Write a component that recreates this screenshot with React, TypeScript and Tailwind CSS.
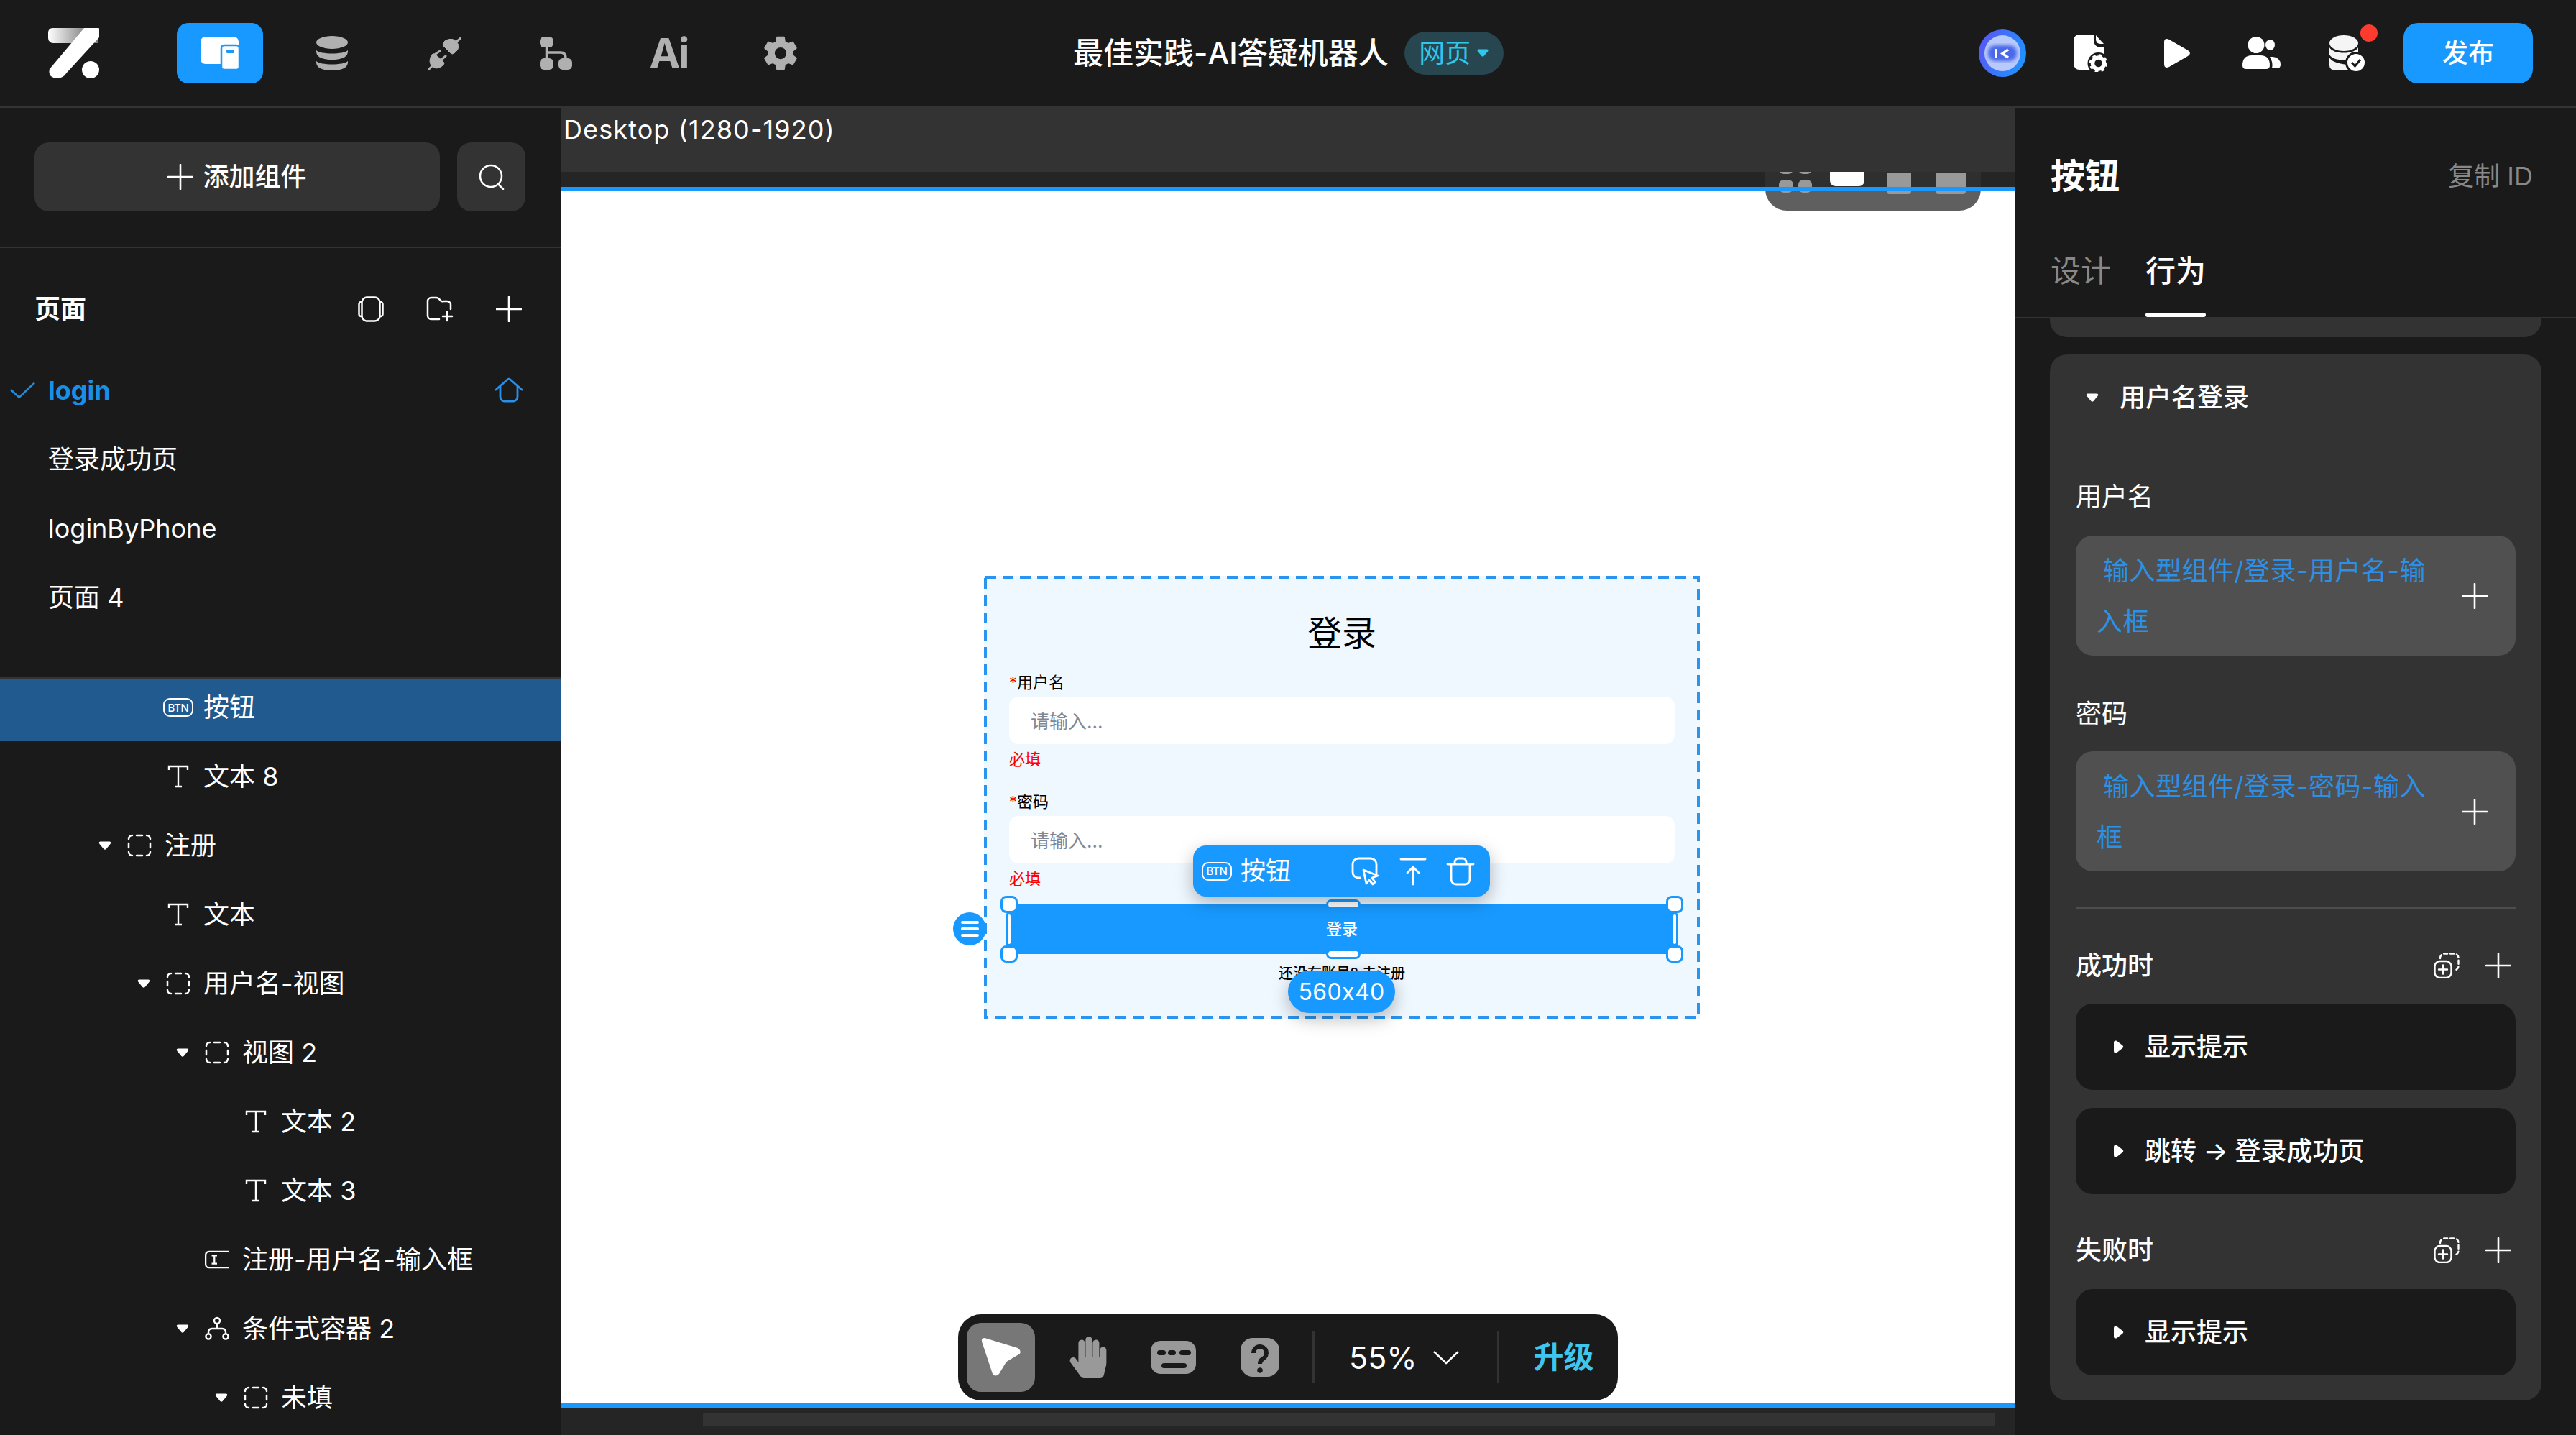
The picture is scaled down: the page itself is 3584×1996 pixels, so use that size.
import React from 'react';
import { IoSettingsSharp } from 'react-icons/io5';
import { FaHandPaper } from 'react-icons/fa';

const PlusIcon = ({ className = 'w-[36px] h-[36px]' }: { className?: string }) => (
  <svg viewBox="0 0 36 36" className={className} fill="none" stroke="currentColor" strokeWidth="2.6" strokeLinecap="round">
    <path d="M18 1V35M1 18H35" />
  </svg>
);

const TriangleDown = () => (
  <svg viewBox="0 0 16 11" className="w-[18px] h-[12px]" fill="white">
    <path d="M2 .5H14Q16.500 1 15 3.500L9.500 10Q8 11.500 6.500 10L1 3.500Q-.5 1 2 .5Z" />
  </svg>
);

const TriangleRight = () => (
  <svg viewBox="0 0 14 18" className="w-[14px] h-[18px]" fill="white">
    <path d="M0 3Q0-.5 4 .8L12 7Q14.500 9 12 11L4 17.200Q0 18.500 0 15Z" />
  </svg>
);

const TextIcon = () => (
  <svg viewBox="0 0 36 36" className="w-[36px] h-[36px]" fill="none" stroke="white" strokeWidth="2.400">
    <path d="M5 9V4H31V9M18 4V32M13 32H23" />
  </svg>
);

const ViewIcon = () => (
  <svg viewBox="0 0 36 36" className="w-[36px] h-[36px]" fill="none" stroke="white" strokeWidth="2.500" strokeLinecap="round">
    <path d="M3 9A5 5 0 0 1 8 4M14 4H22M28 4A5 5 0 0 1 33 9M33 15V21M33 27A5 5 0 0 1 28 32M22 32H14M8 32A5 5 0 0 1 3 27M3 21V15" />
  </svg>
);

const InputIcon = () => (
  <svg viewBox="0 0 38 30" className="w-[37px] h-[28px]" fill="none" stroke="white" strokeWidth="2.400">
    <path d="M37 3H7A5 5 0 0 0 2 8V22A5 5 0 0 0 7 27H37M11 9H19M15 9V21M11 21H19" />
  </svg>
);

const BranchIcon = () => (
  <svg viewBox="0 0 36 36" className="w-[36px] h-[36px]" fill="none" stroke="white" strokeWidth="2.400">
    <circle cx="18" cy="7" r="4" />
    <circle cx="6" cy="29" r="3.600" />
    <circle cx="30" cy="29" r="3.600" />
    <path d="M18 11V18M6 25V23Q6 18 11 18H25Q30 18 30 23V25" />
  </svg>
);

const BtnBadge = () => (
  <span className="flex items-center justify-center shrink-0 w-[42px] h-[26px] rounded-[9px] border-[2.500px] border-white tracking-tight text-[15px] leading-none font-medium text-white">
    BTN
  </span>
);

const treeIcons: Record<string, React.ReactNode> = {
  btn: <BtnBadge />,
  text: <TextIcon />,
  view: <ViewIcon />,
  input: <InputIcon />,
  branch: <BranchIcon />,
};

const tree = [
  { depth: 1, icon: 'btn', label: '按钮', selected: true },
  { depth: 1, icon: 'text', label: '文本 8' },
  { depth: 0, icon: 'view', label: '注册', open: true },
  { depth: 1, icon: 'text', label: '文本' },
  { depth: 1, icon: 'view', label: '用户名-视图', open: true },
  { depth: 2, icon: 'view', label: '视图 2', open: true },
  { depth: 3, icon: 'text', label: '文本 2' },
  { depth: 3, icon: 'text', label: '文本 3' },
  { depth: 2, icon: 'input', label: '注册-用户名-输入框' },
  { depth: 2, icon: 'branch', label: '条件式容器 2', open: true },
  { depth: 3, icon: 'view', label: '未填', open: true },
];

const depthPad = ['pl-[132px]', 'pl-[186px]', 'pl-[240px]', 'pl-[294px]'];

const Logo = () => (
  <svg viewBox="0 0 72 70" className="w-[72px] h-[70px] shrink-0">
    <defs>
      <linearGradient id="logoBar" x1="0" x2="1" y1="0" y2="0">
        <stop offset="0" stopColor="#ffffff" />
        <stop offset="0.8" stopColor="#7d7d7d" />
      </linearGradient>
    </defs>
    <path d="M6 0H70V21H7A7 7 0 0 1 0 14V6A6 6 0 0 1 6 0Z" fill="url(#logoBar)" />
    <path d="M50 0H70Q71 0 71 1V13L26 62Q21 70 12 70Q-1 69 2 57Z" fill="white" />
    <circle cx="59" cy="58" r="12" fill="white" />
  </svg>
);

const NavTile = () => (
  <div className="flex items-center justify-center w-[120px] h-[84px] rounded-[16px] bg-[#1899ff]">
    <svg viewBox="0 0 54 46" className="w-[54px] h-[46px]">
      <rect x="0" y="0" width="53" height="38" rx="7" fill="white" />
      <rect x="29" y="12" width="25" height="34" rx="4" fill="white" stroke="#1899ff" strokeWidth="2.500" />
      <rect x="36" y="18" width="11" height="5" rx="1.500" fill="#1899ff" />
    </svg>
  </div>
);

const DbNav = () => (
  <svg viewBox="0 0 44 48" className="w-[44px] h-[48px]" fill="#b0b0b0">
    <ellipse cx="22" cy="9" rx="22" ry="9" />
    <path d="M0 20C6 26 38 26 44 20 45 30 34 33 22 33S-1 30 0 20Z" />
    <path d="M0 35C6 41 38 41 44 35 45 45 34 48 22 48S-1 45 0 35Z" />
  </svg>
);

const PlugNav = () => (
  <svg viewBox="0 0 46 46" className="w-[46px] h-[46px]" fill="#b0b0b0" stroke="#b0b0b0" strokeLinecap="round">
    <path d="M24 6Q30 2 36 4Q42 7 43 13Q43 19 37 23Q34 25 32 23L22 13Q20 9 24 6Z" strokeWidth="1" />
    <path d="M40 7L46 2" strokeWidth="3" />
    <path d="M6 25Q3 29 3 34Q4 43 12 44Q18 44 22 39Q24 37 22 35L10 24Q8 23 6 25Z" strokeWidth="1" />
    <path d="M11 24L17 20M19 32L25 27M7 40L1 46" strokeWidth="3" />
  </svg>
);

const FlowNav = () => (
  <svg viewBox="0 0 46 46" className="w-[46px] h-[46px]" fill="#b0b0b0">
    <rect x="0" y="0" width="19" height="15" rx="6" />
    <rect x="0" y="30" width="19" height="16" rx="6" />
    <rect x="26" y="30" width="19" height="16" rx="6" />
    <path d="M9.500 15V30M9.500 22H29Q36 22 36 30" fill="none" stroke="#b0b0b0" strokeWidth="3.500" />
  </svg>
);

const navIcons = [
  <DbNav key="db" />,
  <PlugNav key="plug" />,
  <FlowNav key="flow" />,
  <span key="ai" className="text-[58px] leading-none font-bold text-[#b0b0b0] tracking-tighter">Ai</span>,
  <IoSettingsSharp key="gear" className="text-[#b0b0b0] w-[52px] h-[52px]" />,
];

const Avatar = () => (
  <svg viewBox="0 0 66 66" className="w-[66px] h-[66px] shrink-0">
    <defs>
      <linearGradient id="avatarRing" x1="0" x2="1" y1="0.2" y2="0.6">
        <stop offset="0" stopColor="#5a55f5" />
        <stop offset="1" stopColor="#1e93ff" />
      </linearGradient>
      <filter id="avatarBlur">
        <feGaussianBlur stdDeviation="2.500" />
      </filter>
    </defs>
    <circle cx="33" cy="33" r="33" fill="url(#avatarRing)" />
    <circle cx="33" cy="33" r="25" fill="#b8c9fb" />
    <rect x="13" y="22" width="40" height="22" rx="10" fill="#4a68ea" filter="url(#avatarBlur)" />
    <rect x="22" y="27" width="4" height="13" rx="1.500" fill="white" />
    <path d="M41 28L33 33.500L41 39" fill="none" stroke="white" strokeWidth="3.500" />
  </svg>
);

const DocGear = () => (
  <svg viewBox="0 0 47 52" className="w-[47px] h-[52px] shrink-0">
    <path d="M8 0H28V9A9 9 0 0 0 37 18H42V49H8A8 8 0 0 1 0 41V8A8 8 0 0 1 8 0Z" fill="white" />
    <path d="M31 1L42 13H37A6 6 0 0 1 31 7Z" fill="white" />
    <circle cx="34.500" cy="40" r="15" fill="#1a1a1a" />
    <circle cx="34.500" cy="40" r="8" fill="none" stroke="white" strokeWidth="5.500" />
    <circle cx="34.500" cy="40" r="11" fill="none" stroke="white" strokeWidth="3.500" strokeDasharray="4.500 4.140" />
  </svg>
);

const PlayIcon = () => (
  <svg viewBox="0 0 37 42" className="w-[37px] h-[42px] shrink-0" fill="white">
    <path d="M0 6Q0-1 7 2L33 17Q39 21 33 25L7 40Q0 43 0 36Z" />
  </svg>
);

const UsersIcon = () => (
  <svg viewBox="0 0 53 46" className="w-[53px] h-[46px] shrink-0" fill="white">
    <ellipse cx="19" cy="11.500" rx="11.500" ry="11.500" />
    <ellipse cx="38.500" cy="11.500" rx="6.500" ry="7.500" />
    <path d="M0 40Q0 26 13 26H25Q38 26 38 40Q38 45 33 45H5Q0 45 0 40Z" />
    <path d="M38 28H42Q53 29 53 39Q53 44 48 44H41Q43 36 38 28Z" />
  </svg>
);

const DbCheck = () => (
  <svg viewBox="0 0 49 50" className="w-[49px] h-[50px] shrink-0" fill="#f5f5f5">
    <ellipse cx="20" cy="11" rx="20" ry="11" />
    <path d="M0 17C5 27 35 27 40 17V27C35 37 5 37 0 27Z" />
    <path d="M0 31C5 41 30 41 30 41V49H8Q0 48 0 42Z" />
    <circle cx="37" cy="38" r="15" fill="#1a1a1a" />
    <circle cx="37" cy="38" r="12" fill="white" />
    <path d="M31 38L35.500 43L43 34" fill="none" stroke="#1a1a1a" strokeWidth="3" />
  </svg>
);

const DupPlus = () => (
  <svg viewBox="0 0 36 36" className="w-[36px] h-[36px]" fill="none" stroke="white" strokeWidth="2.400" strokeLinecap="round">
    <rect x="1.500" y="12" width="23" height="23" rx="7" />
    <path d="M13 17.500V29.500M7 23.500H19" />
    <path d="M9 8A6 6 0 0 1 15 1.500H28A6 6 0 0 1 34.500 8V19A6 6 0 0 1 29 24.500" strokeDasharray="5 4" />
  </svg>
);

const FieldRow = ({ lines }: { lines: string }) => (
  <div className="flex items-center justify-between h-[167px] rounded-[24px] bg-[#505050] pl-[29px] pr-[39px]">
    <div className="w-[480px] pt-[3px] text-[36px] leading-[71px] tracking-[0.5px] indent-[9px] text-[#2b90e6]">{lines}</div>
    <PlusIcon className="w-[36px] h-[36px] text-white" />
  </div>
);

const ActionRow = ({ label, className = '' }: { label: string; className?: string }) => (
  <div className={`flex items-center h-[120px] rounded-[24px] bg-[#1a1a1a] pl-[53px] text-[36px] font-medium text-white ${className}`}>
    <TriangleRight />
    <span className="ml-[29px]">{label}</span>
  </div>
);

const SectionHead = ({ label, className = '' }: { label: string; className?: string }) => (
  <div className={`flex items-center justify-between h-[50px] text-[36px] font-medium text-white ${className}`}>
    <span>{label}</span>
    <div className="flex items-center gap-[36px] pr-[6px]">
      <DupPlus />
      <PlusIcon className="w-[36px] h-[36px] text-white" />
    </div>
  </div>
);

const FormField = ({ label, className = '' }: { label: string; className?: string }) => (
  <div className={className}>
    <div className="h-[28px] text-[22px] leading-[28px] text-black"><span className="text-[#f00]">*</span>{label}</div>
    <div className="flex items-center h-[66px] mt-[6px] pt-[2px] rounded-[13px] bg-white pl-[30px] text-[26px] text-[#7f8794]">请输入...</div>
    <div className="h-[28px] mt-[7px] text-[22px] leading-[28px] text-[#f00]">必填</div>
  </div>
);

const Handle = ({ className }: { className: string }) => (
  <span className={`absolute bg-white border-[3px] border-[#1899ff] ${className}`} />
);

const FrameCanvas = () => (
  <div className="relative w-[996px] h-[616px] bg-[#eff7ff]">
    <svg className="absolute inset-0 w-full h-full" viewBox="0 0 996 616" fill="none">
      <rect x="2" y="2" width="992" height="612" stroke="#2a94ee" strokeWidth="4" strokeDasharray="15 9" />
    </svg>
    <div className="relative px-[35px] pt-[50px]">
      <div className="h-[60px] text-center text-[48px] leading-[60px] text-black">登录</div>
      <FormField label="用户名" className="mt-[24px]" />
      <FormField label="密码" className="mt-[31px]" />
      <div className="relative flex items-center justify-center h-[69px] mt-[22px] bg-[#1899ff] text-[22px] font-medium text-white">
        登录
        <Handle className="-left-[12px] -top-[12px] w-[24px] h-[24px] rounded-[8px]" />
        <Handle className="-right-[12px] -top-[12px] w-[24px] h-[24px] rounded-[8px]" />
        <Handle className="-left-[12px] -bottom-[12px] w-[24px] h-[24px] rounded-[8px]" />
        <Handle className="-right-[12px] -bottom-[12px] w-[24px] h-[24px] rounded-[8px]" />
        <Handle className="-left-[5px] top-[11px] w-[10px] h-[47px] rounded-[5px]" />
        <Handle className="-right-[5px] top-[11px] w-[10px] h-[47px] rounded-[5px]" />
        <Handle className="left-[441px] -top-[7px] w-[48px] h-[14px] rounded-[7px]" />
        <Handle className="left-[441px] -bottom-[7px] w-[48px] h-[14px] rounded-[7px]" />
      </div>
      <div className="h-[26px] mt-[14px] text-center text-[20px] leading-[26px] font-medium text-black">还没有账号? 去注册</div>
    </div>
    <div className="absolute -left-[43px] top-[468px] flex flex-col items-center justify-center gap-[5px] w-[46px] h-[46px] rounded-full bg-[#1899ff]">
      <span className="w-[25px] h-[4px] rounded-full bg-white" />
      <span className="w-[25px] h-[4px] rounded-full bg-white" />
      <span className="w-[25px] h-[4px] rounded-full bg-white" />
    </div>
    <div className="absolute left-[291px] top-[375px] flex items-center w-[413px] h-[71px] pl-[12px] rounded-[18px] bg-[#1899ff] text-white shadow-[0_8px_24px_rgba(0,0,0,0.28)]">
      <BtnBadge />
      <span className="ml-[12px] text-[35px] leading-none">按钮</span>
      <svg viewBox="0 0 40 40" className="ml-[84px] w-[40px] h-[40px]" fill="none" stroke="white" strokeWidth="2.800" strokeLinejoin="round">
        <path d="M14 29H10A8 8 0 0 1 2 21V10A8 8 0 0 1 10 2H27A8 8 0 0 1 35 10V24" />
        <path d="M17 18L37 26L29 29L33 35L30 38L25 32L21 37Z" />
      </svg>
      <svg viewBox="0 0 40 40" className="ml-[26px] w-[40px] h-[40px]" fill="none" stroke="white" strokeWidth="2.800" strokeLinecap="round">
        <path d="M3 3H37M20 38V14M12 22L20 14L28 22" />
      </svg>
      <svg viewBox="0 0 40 40" className="ml-[26px] w-[40px] h-[40px]" fill="none" stroke="white" strokeWidth="2.800" strokeLinecap="round">
        <path d="M2 10H38M12 10V7A5 5 0 0 1 17 2H23A5 5 0 0 1 28 7V10M7 10V31A7 7 0 0 0 14 38H26A7 7 0 0 0 33 31V10" />
      </svg>
    </div>
    <div className="absolute left-[423px] top-[549px] flex items-center justify-center w-[149px] h-[59px] rounded-full bg-[#1899ff] text-[32px] leading-none tracking-[0.4px] text-white shadow-[0_8px_24px_rgba(0,0,0,0.28)]">
      560x40
    </div>
  </div>
);

const TopDock = () => (
  <div className="absolute left-[1676px] top-[-40px] z-[1] flex items-end w-[300px] h-[94px] rounded-b-[30px] bg-[rgba(50,50,50,0.78)] pl-[19px]">
    <div className="grid grid-cols-2 gap-x-[7px] gap-y-[8px] w-[46px] mb-[25px]">
      {[0, 1, 2, 3].map(i => <span key={i} className="h-[18px] rounded-[7px] bg-[#999]" />)}
    </div>
    <span className="w-[48px] h-[30px] ml-[25px] mb-[34px] rounded-b-[8px] bg-white" />
    <span className="w-[34px] h-[30px] ml-[31px] mb-[23px] rounded-b-[4px] bg-[#999]" />
    <span className="w-[42px] h-[30px] ml-[34px] mb-[23px] rounded-b-[4px] bg-[#999]" />
  </div>
);

const BottomDock = () => (
  <div className="absolute left-[553px] bottom-[4px] flex items-center w-[918px] h-[120px] rounded-[32px] bg-[#1a1a1a] pl-[12px]">
    <div className="flex items-center justify-center w-[95px] h-[96px] rounded-[20px] bg-[#777]">
      <svg viewBox="0 0 56 56" className="w-[56px] h-[56px]" fill="white">
        <path d="M1 6Q0 1 5 1L51 15Q56 18 54 23L37 33Q35 34 34 36L25 51Q20 56 16 51Z" />
      </svg>
    </div>
    <FaHandPaper className="ml-[45px] w-[58px] h-[58px] text-[#999]" />
    <svg viewBox="0 0 63 46" className="ml-[58px] w-[63px] h-[46px]">
      <rect width="63" height="46" rx="14" fill="#999" />
      <g fill="#1a1a1a">
        <rect x="9" y="13" width="12" height="7" rx="3.500" />
        <rect x="24" y="13" width="11" height="7" rx="3.500" />
        <rect x="40" y="13" width="16" height="7" rx="3.500" />
        <rect x="15" y="31" width="35" height="7" rx="3.500" />
      </g>
    </svg>
    <svg viewBox="0 0 54 54" className="ml-[62px] w-[54px] h-[54px]">
      <rect width="54" height="54" rx="17" fill="#999" />
      <path d="M18 21A9 9 0 1 1 31 29Q27 31 27 36" fill="none" stroke="#1a1a1a" strokeWidth="6" />
      <circle cx="27" cy="45" r="3.800" fill="#1a1a1a" />
    </svg>
    <span className="ml-[46px] w-[3px] h-[72px] bg-[#333]" />
    <span className="ml-[48px] text-[43px] leading-none text-white">55%</span>
    <svg viewBox="0 0 36 20" className="ml-[22px] w-[36px] h-[20px]" fill="none" stroke="white" strokeWidth="2.600">
      <path d="M1 2L18 18L35 2" />
    </svg>
    <span className="ml-[53px] w-[3px] h-[72px] bg-[#333]" />
    <span className="ml-[48px] text-[42px] leading-none font-semibold text-[#3ec6ee]">升级</span>
  </div>
);

export default function App() {
  return (
    <div className="flex flex-col w-[3584px] h-[1996px] overflow-hidden bg-[#1a1a1a] text-white font-['Inter','Noto_Sans_CJK_SC',sans-serif]">
      <header className="flex items-center h-[147px] shrink-0 pl-[67px]">
        <Logo />
        <nav className="flex items-center ml-[89px]">
          <div className="flex items-center justify-center w-[156px]"><NavTile /></div>
          {navIcons.map((icon, i) => (
            <div key={i} className="flex items-center justify-center w-[156px] h-[84px]">{icon}</div>
          ))}
        </nav>
        <h1 className="ml-[329px] text-[42px] leading-none font-medium whitespace-nowrap">最佳实践-AI答疑机器人</h1>
        <div className="flex items-center justify-center w-[138px] h-[60px] ml-[22px] rounded-full bg-[#27464f] text-[36px] leading-none text-[#2fc7ec]">
          网页
          <svg viewBox="0 0 16 11" className="ml-[9px] w-[16px] h-[11px]" fill="#2fc7ec">
            <path d="M2 .5H14Q16.500 1 15 3.500L9.500 10Q8 11.500 6.500 10L1 3.500Q-.5 1 2 .5Z" />
          </svg>
        </div>
        <div className="flex items-center ml-auto pr-[60px]">
          <Avatar />
          <div className="ml-[66px]"><DocGear /></div>
          <div className="ml-[79px]"><PlayIcon /></div>
          <div className="ml-[72px]"><UsersIcon /></div>
          <div className="relative ml-[68px]">
            <DbCheck />
            <span className="absolute left-[43px] -top-[15px] w-[24px] h-[24px] rounded-full bg-[#ff3b30]" />
          </div>
          <button className="ml-[54px] w-[180px] h-[84px] rounded-[20px] bg-[#1899ff] text-[36px] font-medium text-white">发布</button>
        </div>
      </header>

      <div className="flex flex-1 min-h-0">
        <aside className="flex flex-col w-[780px] shrink-0 border-t-[3px] border-[#333]">
          <div className="flex gap-[24px] h-[195px] shrink-0 px-[48px] pt-[48px] border-b-[2px] border-[#333]">
            <button className="flex items-center justify-center w-[564px] h-[96px] rounded-[20px] bg-[#333] text-[36px] font-medium text-white">
              <PlusIcon className="w-[36px] h-[36px]" />
              <span className="ml-[13px]">添加组件</span>
            </button>
            <button className="flex items-center justify-center w-[95px] h-[96px] rounded-[20px] bg-[#333]">
              <svg viewBox="0 0 36 36" className="w-[36px] h-[36px]" fill="none" stroke="white" strokeWidth="2.500" strokeLinecap="round">
                <circle cx="17" cy="17" r="15" />
                <path d="M27 28L34 35" />
              </svg>
            </button>
          </div>

          <div className="flex flex-col h-[596px] shrink-0 pt-[37px]">
            <div className="flex items-center justify-between h-[96px] pl-[48px] pr-[54px]">
              <span className="text-[36px] font-bold">页面</span>
              <div className="flex items-center gap-[59px]">
                <svg viewBox="0 0 36 36" className="w-[36px] h-[36px]" fill="none" stroke="white" strokeWidth="2.500">
                  <rect x="5.500" y="1.500" width="25" height="33" rx="7" />
                  <path d="M5.500 8H4.500A3 3 0 0 0 1.500 11V25A3 3 0 0 0 4.500 28H5.500M30.500 8H31.500A3 3 0 0 1 34.500 11V25A3 3 0 0 1 31.500 28H30.500" />
                </svg>
                <svg viewBox="0 0 38 36" className="w-[38px] h-[36px]" fill="none" stroke="white" strokeWidth="2.500" strokeLinecap="round">
                  <path d="M18 32H7A5 5 0 0 1 2 27V7A5 5 0 0 1 7 2H14Q17 2 19 5T24 7H29A5 5 0 0 1 34 12V18" />
                  <path d="M29 22V34M23 28H36" />
                </svg>
                <PlusIcon className="w-[36px] h-[36px]" />
              </div>
            </div>
            <div className="relative flex items-center h-[96px] mt-[17px] pl-[67px] pr-[52px] text-[36px] font-bold text-[#1a8fe8]">
              <svg viewBox="0 0 36 24" className="absolute left-[14px] w-[35px] h-[24px]" fill="none" stroke="#1a8fe8" strokeWidth="2.600">
                <path d="M1 11L13 22L35 1" />
              </svg>
              <span className="flex-1">login</span>
              <svg viewBox="0 0 40 36" className="w-[40px] h-[36px]" fill="none" stroke="#2a8fe8" strokeWidth="2.800" strokeLinejoin="round" strokeLinecap="round">
                <path d="M2 17L18 3Q20 1.500 22 3L38 17" />
                <path d="M8 13V27A6 6 0 0 0 14 33H26A6 6 0 0 0 32 27V13" />
              </svg>
            </div>
            {['登录成功页', 'loginByPhone', '页面 4'].map(page => (
              <div key={page} className="flex items-center h-[96px] pl-[67px] text-[36px]">{page}</div>
            ))}
          </div>

          <div className="flex-1 min-h-0 overflow-hidden border-t-[3px] border-[#333]">
            <div className="-mt-[10px]">
              {tree.map(node => (
                <div key={node.label} className={`flex items-center h-[96px] pt-[4px] text-[36px] ${depthPad[node.depth]} ${node.selected ? 'bg-[#205a8f]' : ''}`}>
                  <span className="flex items-center justify-center w-[28px]">{node.open && <TriangleDown />}</span>
                  <span className="flex items-center justify-center w-[36px] ml-[16px]">{treeIcons[node.icon]}</span>
                  <span className="ml-[17px] whitespace-nowrap">{node.label}</span>
                </div>
              ))}
            </div>
          </div>
        </aside>

        <main className="flex flex-col flex-1 min-w-0 bg-[#333]">
          <div className="flex items-center h-[92px] shrink-0 pb-[26px] pl-[4px] text-[36px] leading-none tracking-[1.1px]">Desktop (1280-1920)</div>
          <div className="relative flex flex-col flex-1 min-h-0 overflow-hidden bg-[#252525]">
            <div className="h-[21px] shrink-0" />
            <div className="relative z-10 h-[6px] shrink-0 bg-[#1899ff]" />
            <div className="relative flex-1 min-h-0 bg-white pl-[589px] pt-[535px] text-black">
              <FrameCanvas />
              <BottomDock />
            </div>
            <div className="relative z-10 h-[6px] shrink-0 bg-[#1899ff]" />
            <div className="h-[38px] shrink-0 pt-[8px] pl-[198px]">
              <div className="w-[1797px] h-[18px] bg-[#333]" />
            </div>
            <TopDock />
          </div>
        </main>

        <aside className="flex flex-col w-[780px] shrink-0 border-t-[3px] border-[#333]">
          <div className="relative h-[293px] shrink-0 pl-[49px] pr-[60px] border-b-[2px] border-[#333]">
            <div className="flex items-center justify-between h-[60px] mt-[65px]">
              <span className="text-[48px] font-bold leading-none">按钮</span>
              <span className="text-[36px] leading-none text-[#888]">复制 ID</span>
            </div>
            <div className="flex gap-[48px] h-[60px] mt-[72px] text-[42px] leading-[60px]">
              <span className="text-[#888]">设计</span>
              <span className="relative font-medium text-white">
                行为
                <span className="absolute left-0 right-0 top-[88px] h-[6px] rounded-full bg-white" />
              </span>
            </div>
          </div>

          <div className="px-[48px]">
            <div className="h-[26px] rounded-b-[24px] bg-[#333]" />
            <div className="mt-[24px] h-[1455px] rounded-[24px] bg-[#333] px-[36px] pt-[30px]">
              <div className="flex items-center h-[60px] pl-[14px] text-[36px] font-medium">
                <TriangleDown />
                <span className="ml-[29px]">用户名登录</span>
              </div>
              <div className="h-[50px] mt-[83px] text-[36px] leading-[50px]">用户名</div>
              <div className="mt-[29px]"><FieldRow lines="输入型组件/登录-用户名-输入框" /></div>
              <div className="h-[50px] mt-[54px] pt-[2px] text-[36px] leading-[50px]">密码</div>
              <div className="mt-[29px]"><FieldRow lines="输入型组件/登录-密码-输入框" /></div>
              <div className="h-[3px] mt-[50px] bg-[#4d4d4d]" />
              <SectionHead label="成功时" className="mt-[53px]" />
              <ActionRow label="显示提示" className="mt-[28px]" />
              <ActionRow label="跳转 → 登录成功页" className="mt-[25px]" />
              <SectionHead label="失败时" className="mt-[53px]" />
              <ActionRow label="显示提示" className="mt-[29px]" />
            </div>
          </div>
        </aside>
      </div>
    </div>
  );
}
